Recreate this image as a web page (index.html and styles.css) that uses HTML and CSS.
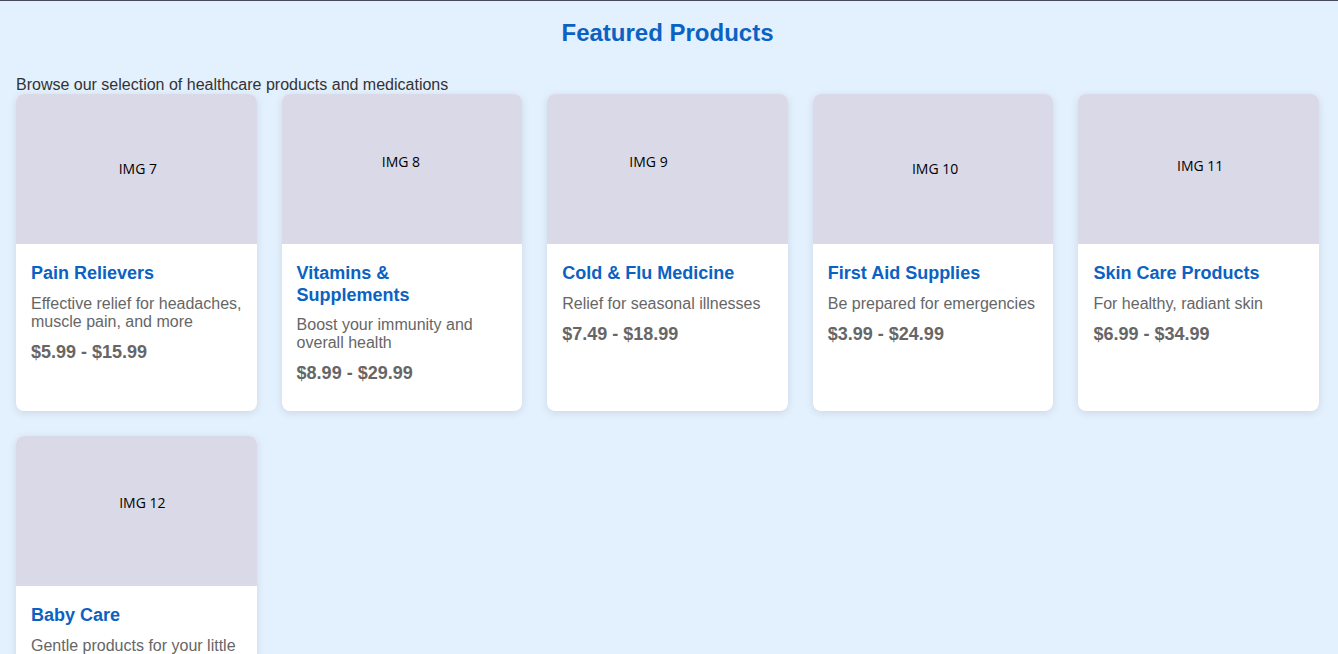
FILE: index.html
```html
<!DOCTYPE html>
<html lang="en">
<head>
<meta charset="utf-8">
<title>Featured Products</title>
<link rel="stylesheet" href="styles.css">
</head>
<body>
<main class="page">
  <h2 class="page-title">Featured Products</h2>
  <p class="page-sub">Browse our selection of healthcare products and medications</p>
  <section class="grid">
    <article class="card">
      <div class="card-img"><span class="img-label" style="transform: translate(1.5px, -1px)">IMG 7</span></div>
      <div class="card-body">
        <h3 class="card-title">Pain Relievers</h3>
        <p class="card-desc">Effective relief for headaches, muscle pain, and more</p>
        <p class="card-price">$5.99 - $15.99</p>
      </div>
    </article>
    <article class="card">
      <div class="card-img"><span class="img-label" style="transform: translate(-1px, -8px)">IMG 8</span></div>
      <div class="card-body">
        <h3 class="card-title">Vitamins &amp; Supplements</h3>
        <p class="card-desc">Boost your immunity and overall health</p>
        <p class="card-price">$8.99 - $29.99</p>
      </div>
    </article>
    <article class="card">
      <div class="card-img"><span class="img-label" style="transform: translate(-19px, -8px)">IMG 9</span></div>
      <div class="card-body">
        <h3 class="card-title">Cold &amp; Flu Medicine</h3>
        <p class="card-desc">Relief for seasonal illnesses</p>
        <p class="card-price">$7.49 - $18.99</p>
      </div>
    </article>
    <article class="card">
      <div class="card-img"><span class="img-label" style="transform: translate(2px, -1px)">IMG 10</span></div>
      <div class="card-body">
        <h3 class="card-title">First Aid Supplies</h3>
        <p class="card-desc">Be prepared for emergencies</p>
        <p class="card-price">$3.99 - $24.99</p>
      </div>
    </article>
    <article class="card">
      <div class="card-img"><span class="img-label" style="transform: translate(1.5px, -4px)">IMG 11</span></div>
      <div class="card-body">
        <h3 class="card-title">Skin Care Products</h3>
        <p class="card-desc">For healthy, radiant skin</p>
        <p class="card-price">$6.99 - $34.99</p>
      </div>
    </article>
    <article class="card">
      <div class="card-img"><span class="img-label" style="transform: translate(6px, -9px)">IMG 12</span></div>
      <div class="card-body">
        <h3 class="card-title">Baby Care</h3>
        <p class="card-desc">Gentle products for your little ones</p>
        <p class="card-price">$4.99 - $19.99</p>
      </div>
    </article>
  </section>
</main>
</body>
</html>
```
FILE: styles.css
```css
html, body {
  margin: 0;
  padding: 0;
}

body {
  background: #e3f0fd;
  border-top: 1px solid #464b57;
  font-family: "Liberation Sans", Arial, sans-serif;
  color: #333;
}

.page {
  padding: 18px 19px 40px 16px;
}

.page-title {
  margin: 0 0 29px;
  text-align: center;
  font-size: 24px;
  font-weight: bold;
  color: #0a62c3;
}

.page-sub {
  margin: 0;
  font-size: 16px;
  color: #333;
}

.grid {
  display: grid;
  grid-template-columns: repeat(5, 1fr);
  gap: 25px;
}

.card {
  background: #fff;
  border-radius: 8px;
  overflow: hidden;
  box-shadow: 0 2px 8px rgba(0, 0, 0, 0.1);
}

.card-img {
  height: 150px;
  background: #dad9e8;
  display: flex;
  align-items: center;
  justify-content: center;
}

.img-label {
  font-family: "Open Sans", sans-serif;
  font-size: 14px;
  color: #000;
}

.card-body {
  padding: 19px 15px 27px;
}

.card-title {
  margin: 0 0 10px;
  font-size: 18px;
  line-height: 1.2;
  font-weight: bold;
  color: #0a62c3;
}

.card-desc {
  margin: 0 0 11px;
  font-size: 16px;
  color: #666;
}

.card-price {
  margin: 0;
  font-size: 18px;
  font-weight: bold;
  color: #666;
}
```
